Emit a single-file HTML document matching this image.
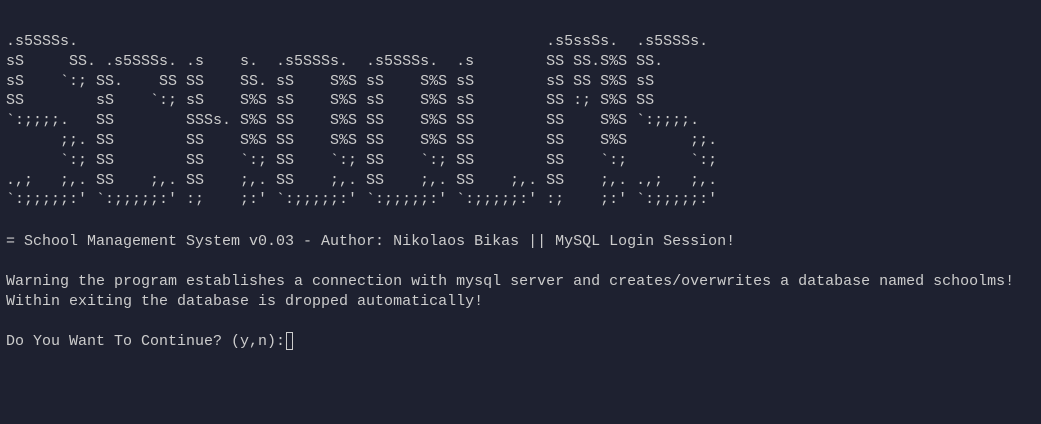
<!DOCTYPE html>
<html><head><meta charset="utf-8"><style>
html,body{margin:0;padding:0;background:#1e2130;width:1041px;height:424px;overflow:hidden}
pre{margin:0;position:absolute;left:6px;font-family:"Liberation Mono",monospace;font-size:15px;line-height:19.8px;color:#cccccc;white-space:pre}
.a{top:32px}
.b{top:232px;line-height:20px}
.cur{display:inline-block;width:7px;height:18px;border:1.5px solid #cccccc;vertical-align:-5px;margin-left:1px;box-sizing:border-box}
</style></head><body><pre class="a">.s5SSSs.                                                    .s5ssSs.  .s5SSSs.
sS     SS. .s5SSSs. .s    s.  .s5SSSs.  .s5SSSs.  .s        SS SS.S%S SS.
sS    `:; SS.    SS SS    SS. sS    S%S sS    S%S sS        sS SS S%S sS
SS        sS    `:; sS    S%S sS    S%S sS    S%S sS        SS :; S%S SS
`:;;;;.   SS        SSSs. S%S SS    S%S SS    S%S SS        SS    S%S `:;;;;.
      ;;. SS        SS    S%S SS    S%S SS    S%S SS        SS    S%S       ;;.
      `:; SS        SS    `:; SS    `:; SS    `:; SS        SS    `:;       `:;
.,;   ;,. SS    ;,. SS    ;,. SS    ;,. SS    ;,. SS    ;,. SS    ;,. .,;   ;,.
`:;;;;;:' `:;;;;;:' :;    ;:' `:;;;;;:' `:;;;;;:' `:;;;;;:' :;    ;:' `:;;;;;:'</pre><pre class="b">= School Management System v0.03 - Author: Nikolaos Bikas || MySQL Login Session!

Warning the program establishes a connection with mysql server and creates/overwrites a database named schoolms!
Within exiting the database is dropped automatically!

Do You Want To Continue? (y,n):<span class="cur"></span></pre></body></html>
